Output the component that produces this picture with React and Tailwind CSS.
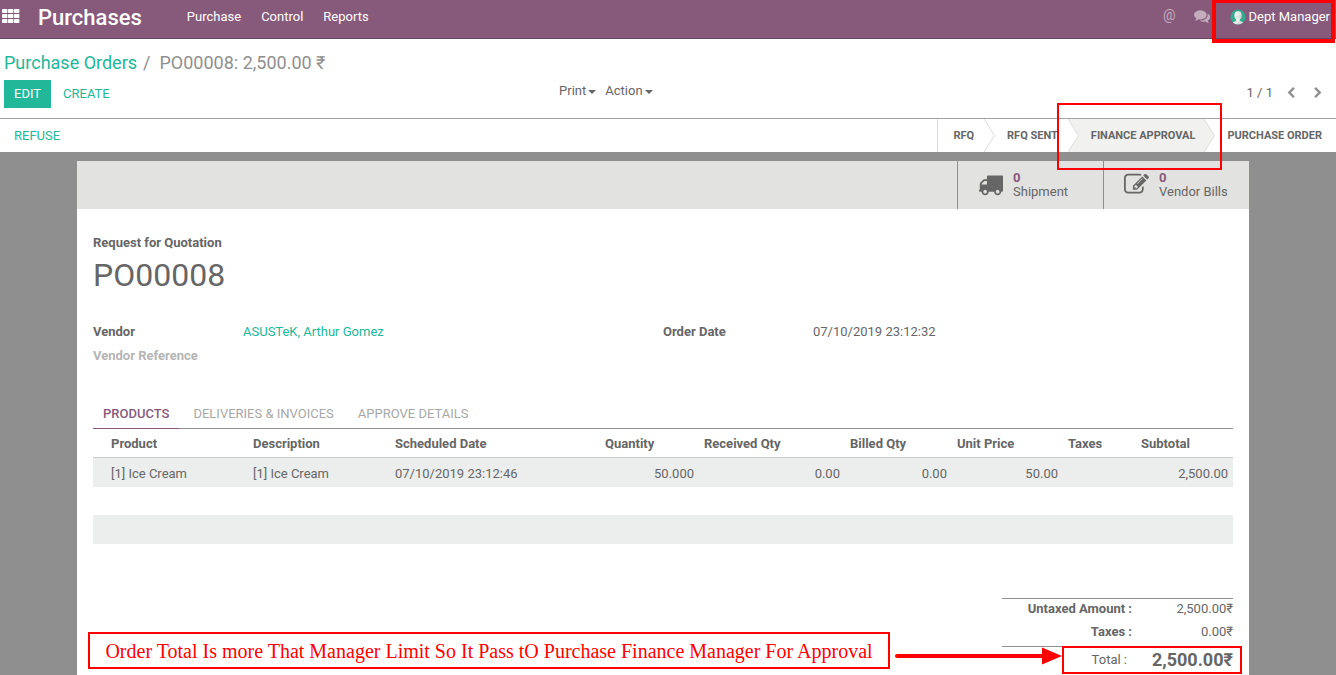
import React from "react";

function Icon({ path, className }) {
  return (
    <svg viewBox="0 0 1792 1792" fill="currentColor" className={className} aria-hidden="true">
      <path d={path} />
    </svg>
  );
}

const TRUCK =
  "M640 1408q0-52-38-90t-90-38-90 38-38 90 38 90 90 38 90-38 38-90zm-384-512h384v-256h-158q-13 0-22 9l-195 195q-9 9-9 22v30zm1280 512q0-52-38-90t-90-38-90 38-38 90 38 90 90 38 90-38 38-90zm256-1088v1024q0 15-4 26.5t-13.5 18.5-16.5 11.5-23.5 6-22.5 2-25.5 0-22.5-.5q0 106-75 181t-181 75-181-75-75-181h-384q0 106-75 181t-181 75-181-75-75-181h-64q-3 0-22.5.5t-25.5 0-22.5-2-23.5-6-16.5-11.5-13.5-18.5-4-26.5q0-26 19-45t45-19v-320q0-8-.5-35t0-38 2.5-34.5 6.5-37 14-30.5 22.5-30l198-198q19-19 50.5-32t58.5-13h160v-192q0-26 19-45t45-19h1024q26 0 45 19t19 45z";
const PENCIL_SQUARE =
  "M888 1184l116-116-152-152-116 116v56h96v96h56zm440-720q-16-16-33 1l-350 350q-17 17-1 33t33-1l350-350q17-17 1-33zm80 594v190q0 119-84.5 203.5t-203.5 84.5h-832q-119 0-203.5-84.5t-84.5-203.5v-832q0-119 84.5-203.5t203.5-84.5h832q63 0 117 25 15 7 18 23 3 17-9 29l-49 49q-14 14-32 8-23-6-45-6h-832q-66 0-113 47t-47 113v832q0 66 47 113t113 47h832q66 0 113-47t47-113v-126q0-13 9-22l64-64q15-15 35-7t20 29zm-96-738l288 288-672 672h-288v-288zm444 132l-92 92-288-288 92-92q28-28 68-28t68 28l152 152q28 28 28 68t-28 68z";
const COMMENTS =
  "M1408 768q0 139-94 257t-256.5 186.5-353.5 68.5q-86 0-176-16-124 88-278 128-36 9-86 16h-3q-11 0-20.5-8t-11.5-21q-1-3-1-6.5t.5-6.5 2-6l2.5-5 3.5-5.5 4-5 4.5-5 4-4.5q5-6 23-25t26-29.5 22.5-29 25-38.5 20.5-44q-124-72-195-177t-71-224q0-139 94-257t256.5-186.5 353.5-68.5 353.5 68.5 256.5 186.5 94 257zm384 256q0 120-71 224.5t-195 176.5q10 24 20.5 44t25 38.5 22.5 29 26 29.5 23 25q1 1 4 4.5t4.5 5 4 5 3.5 5.5l2.5 5 2 6 .5 6.5-1 6.5q-3 14-13 22t-22 7q-50-7-86-16-154-40-278-128-90 16-176 16-271 0-472-132 58 4 88 4 161 0 309-45t264-129q125-92 192-212t67-254q0-77-23-152 129 71 204 178t75 230z";
const CHEVRON_LEFT =
  "M1427 301l-531 531 531 531q19 19 19 45t-19 45l-166 166q-19 19-45 19t-45-19l-742-742q-19-19-19-45t19-45l742-742q19-19 45-19t45 19l166 166q19 19 19 45t-19 45z";
const CHEVRON_RIGHT =
  "M1363 877l-742 742q-19 19-45 19t-45-19l-166-166q-19-19-19-45t19-45l531-531-531-531q-19-19-19-45t19-45l166-166q19-19 45-19t45 19l742 742q19 19 19 45t-19 45z";

function AppsIcon() {
  return (
    <svg viewBox="0 0 18 14" className="h-3.5 w-[18px]" fill="currentColor" aria-hidden="true">
      {[0, 5, 10].map((y) =>
        [0, 6, 12].map((x) => <rect key={`${x}-${y}`} x={x} y={y} width="5.4" height="4" rx="0.8" />)
      )}
    </svg>
  );
}

function Avatar() {
  return (
    <svg viewBox="0 0 16 16" className="h-4 w-4" aria-hidden="true">
      <defs>
        <linearGradient id="face" x1="0" y1="0" x2="1" y2="1">
          <stop offset="0" stopColor="#ffffff" />
          <stop offset="1" stopColor="#c4cfcc" />
        </linearGradient>
        <clipPath id="disc">
          <circle cx="8" cy="8" r="7.6" />
        </clipPath>
      </defs>
      <circle cx="8" cy="8" r="7.6" fill="#35a98d" />
      <g clipPath="url(#disc)" fill="url(#face)">
        <ellipse cx="8" cy="6.6" rx="3.6" ry="4.4" />
        <path d="M6.2 9.5h3.6v2.2l3 1.6V16H3.2v-2.7l3-1.6z" />
      </g>
    </svg>
  );
}

function Header() {
  return (
    <header className="flex h-[39px] items-center border-b border-[#68465f] bg-[#875a7b] pl-0.5 pr-1.5 text-white">
      <button type="button" aria-label="Applications" className="mb-1.5">
        <AppsIcon />
      </button>
      <a href="#purchases" className="ml-[18px] pb-0.5 text-[22px] leading-6 font-medium">
        Purchases
      </a>
      <nav className="ml-[45px] flex flex-1 gap-5 pb-1">
        <a href="#purchase">Purchase</a>
        <a href="#control">Control</a>
        <a href="#reports">Reports</a>
      </nav>
      <div className="flex h-full items-center pb-1">
        <button type="button" aria-label="Mentions" className="mr-[18px] mb-1 text-sm text-[#c3adbd]">
          @
        </button>
        <button type="button" aria-label="Conversations" className="mr-5 mb-0.5 text-[#c3adbd]">
          <Icon path={COMMENTS} className="h-4 w-4" />
        </button>
        <button type="button" className="relative flex items-center gap-[3px]">
          <Avatar />
          <span>Dept Manager</span>
          <span className="pointer-events-none absolute -top-2 -right-[5px] -bottom-4 -left-[18px] border-4 border-[#ff0000]" />
        </button>
      </div>
    </header>
  );
}

function Menu({ label }) {
  return (
    <button type="button" className="flex h-[22px] items-center gap-0.5">
      {label}
      <svg viewBox="0 0 8 4" className="mt-0.5 h-1 w-2" fill="currentColor" aria-hidden="true">
        <path d="M0 0h8L4 4z" />
      </svg>
    </button>
  );
}

function ControlPanel() {
  return (
    <div className="border-b border-[#a2a2a2] px-1 pt-3 pb-2.5">
      <div className="flex h-6 items-center text-lg text-[#8f8f8f]">
        <a href="#orders" className="text-[#21b799]">
          Purchase Orders
        </a>
        <span className="mr-[9px] ml-1.5">/</span>
        <span>PO00008: 2,500.00 ₹</span>
      </div>
      <div className="mt-[5px] flex h-7">
        <div className="flex w-[41.8%] gap-0.5">
          <button type="button" className="bg-[#21b799] px-2.5 text-white">
            EDIT
          </button>
          <button type="button" className="px-2.5 text-[#21b799]">
            CREATE
          </button>
        </div>
        <div className="flex flex-1 gap-[9px]">
          <Menu label="Print" />
          <Menu label="Action" />
        </div>
        <div className="flex h-[26px] items-center pr-2">
          <span className="mr-3">1 / 1</span>
          <button type="button" aria-label="Previous" className="mr-[15px] text-[#8f8f8f]">
            <Icon path={CHEVRON_LEFT} className="h-3 w-3" />
          </button>
          <button type="button" aria-label="Next" className="text-[#8f8f8f]">
            <Icon path={CHEVRON_RIGHT} className="h-3 w-3" />
          </button>
        </div>
      </div>
    </div>
  );
}

function StepArrow({ left, right }) {
  return (
    <svg viewBox="0 0 11 33" className="h-full w-[11px]" preserveAspectRatio="none" aria-hidden="true">
      <rect width="11" height="33" fill={right} />
      <path d="M0 0L10.500 16.500L0 33z" fill={left} />
      <path d="M0 0L10.500 16.500L0 33" fill="none" stroke="#dcdcdc" />
    </svg>
  );
}

function StatusBar() {
  return (
    <div className="flex h-[33px] items-stretch justify-between pr-3.5 pl-1">
      <button type="button" className="px-2.5 text-[#21b799]">
        REFUSE
      </button>
      <ol className="flex items-stretch border-l border-[#dcdcdc] text-[11px] font-bold">
        <li className="flex items-center pr-2.5 pl-[15px]">RFQ</li>
        <li aria-hidden="true">
          <StepArrow left="#ffffff" right="#ffffff" />
        </li>
        <li className="flex items-center pr-2.5 pl-3">RFQ SENT</li>
        <li className="relative flex items-stretch" aria-current="step">
          <StepArrow left="#ffffff" right="#f1f1f0" />
          <span className="flex items-center bg-[#f1f1f0] pr-[9px] pl-3">FINANCE APPROVAL</span>
          <StepArrow left="#f1f1f0" right="#ffffff" />
          <span className="pointer-events-none absolute -top-4 -right-[7px] -bottom-[18px] -left-[11px] z-10 border-2 border-[#ff0000]" />
        </li>
        <li className="flex items-center pl-3">PURCHASE ORDER</li>
      </ol>
    </div>
  );
}

function StatButton({ icon, value, label }) {
  return (
    <button
      type="button"
      className="flex w-[146px] items-center border-l border-[#8f8f8f] pl-5 text-left leading-[14px]"
    >
      <Icon path={icon} className="mr-2.5 mb-0.5 h-[25px] w-[25px]" />
      <span>
        <span className="block font-bold text-[#875a7b]">{value}</span>
        <span className="block">{label}</span>
      </span>
    </button>
  );
}

const COLUMNS = [
  { name: "Product", cell: "[1] Ice Cream", head: "w-[155px] pl-[18px]", body: "pl-[18px]" },
  { name: "Description", cell: "[1] Ice Cream", head: "w-[142px] pl-[5px]", body: "pl-[5px]" },
  { name: "Scheduled Date", cell: "07/10/2019 23:12:46", head: "pl-[5px]", body: "pl-[5px]" },
  { name: "Quantity", cell: "50.000", head: "w-[99px] pl-[5px]", body: "pr-[5px] text-right" },
  { name: "Received Qty", cell: "0.00", head: "w-[146px] pl-[5px]", body: "pr-[5px] text-right" },
  { name: "Billed Qty", cell: "0.00", head: "w-[107px] pl-[5px]", body: "pr-[5px] text-right" },
  { name: "Unit Price", cell: "50.00", head: "w-[111px] pl-[5px]", body: "pr-[5px] text-right" },
  { name: "Taxes", cell: "", head: "w-[73px] pl-[5px]", body: "pl-[5px]" },
  { name: "Subtotal", cell: "2,500.00", head: "w-[97px] pl-[5px]", body: "pr-[5px] text-right" },
];

function OrderLines() {
  return (
    <table className="w-full table-fixed border-separate border-spacing-0">
      <thead>
        <tr className="h-[29px]">
          {COLUMNS.map((c) => (
            <th key={c.name} scope="col" className={`border-b border-[#cacaca] pt-0.5 text-left font-bold ${c.head}`}>
              {c.name}
            </th>
          ))}
        </tr>
      </thead>
      <tbody>
        <tr className="h-[29px] bg-[#eceeed]">
          {COLUMNS.map((c) => (
            <td key={c.name} className={`pt-0.5 ${c.body}`}>
              {c.cell}
            </td>
          ))}
        </tr>
        <tr className="h-7">
          <td colSpan={9} />
        </tr>
        <tr className="h-[29px] bg-[#eceeed]">
          <td colSpan={9} />
        </tr>
      </tbody>
    </table>
  );
}

function Totals() {
  return (
    <dl className="mt-[54px] ml-auto w-[231px] border-t border-[#8f8f8f]">
      <div className="flex h-5 items-center">
        <dt className="w-[130px] text-right font-bold">Untaxed Amount :</dt>
        <dd className="flex-1 text-right">2,500.00₹</dd>
      </div>
      <div className="flex h-[27px] items-center pb-0.5">
        <dt className="w-[130px] text-right font-bold">Taxes :</dt>
        <dd className="flex-1 text-right">0.00₹</dd>
      </div>
      <div className="relative flex h-7 items-center border-t border-[#8f8f8f] pb-0.5">
        <dt className="w-[125px] text-right">Total :</dt>
        <dd className="flex-1 text-right text-lg leading-5 font-bold">2,500.00₹</dd>
        <span className="pointer-events-none absolute -top-px -right-[9px] bottom-0 left-[60px] border-2 border-[#ff0000]" />
        <div className="absolute -top-[15px] right-[171px] flex gap-[5px]">
          <p className="flex h-[37px] min-w-[802px] items-center justify-center border-2 border-[#ff0000] px-2 font-['Liberation_Serif',serif] text-xl whitespace-nowrap text-[#ff0000]">
            Order Total Is more That Manager Limit So It Pass tO Purchase Finance Manager For Approval
          </p>
          <svg viewBox="0 0 167 18" className="mt-[15px] h-[18px] w-[167px]" aria-hidden="true">
            <path d="M2 9H150" stroke="#ff0000" strokeWidth="4" strokeLinecap="round" />
            <path d="M147 0.500L167 9L147 17.500z" fill="#ff0000" />
          </svg>
        </div>
      </div>
    </dl>
  );
}

function Sheet() {
  return (
    <main className="flex flex-1 bg-[#8f8f8f] pt-[9px] pr-2.5">
      <div className="mx-auto w-full max-w-[1172px] bg-white">
        <div className="flex h-12 justify-end bg-[#e2e2e0]">
          <StatButton icon={TRUCK} value="0" label="Shipment" />
          <StatButton icon={PENCIL_SQUARE} value="0" label="Vendor Bills" />
        </div>
        <div className="px-4 pt-6">
          <div className="font-bold">Request for Quotation</div>
          <h1 className="text-[32px] leading-[44px]">PO00008</h1>
          <dl className="mt-[23px] grid grid-cols-2 leading-6">
            <div className="flex">
              <dt className="w-[150px] font-bold">Vendor</dt>
              <dd>
                <a href="#vendor" className="text-[#21b799]">
                  ASUSTeK, Arthur Gomez
                </a>
              </dd>
            </div>
            <div className="flex">
              <dt className="w-[150px] font-bold">Order Date</dt>
              <dd>07/10/2019 23:12:32</dd>
            </div>
            <div className="flex">
              <dt className="w-[150px] font-bold text-[#b5b5b5]">Vendor Reference</dt>
              <dd />
            </div>
          </dl>
          <div role="tablist" className="mt-[30px] flex h-[31px] gap-1 border-b border-[#8f8f8f] text-[#a8a8a8]">
            <button
              type="button"
              role="tab"
              aria-selected="true"
              className="-mb-px border-b border-[#875a7b] px-2.5 pt-0.5 font-medium text-[#875a7b]"
            >
              PRODUCTS
            </button>
            <button type="button" role="tab" aria-selected="false" className="px-2.5 pt-0.5">
              DELIVERIES &amp; INVOICES
            </button>
            <button type="button" role="tab" aria-selected="false" className="px-2.5 pt-0.5">
              APPROVE DETAILS
            </button>
          </div>
          <OrderLines />
          <Totals />
        </div>
      </div>
    </main>
  );
}

export default function App() {
  return (
    <div className="flex min-h-screen flex-col bg-white font-['Roboto',sans-serif] text-[13px] leading-5 text-[#666666]">
      <Header />
      <ControlPanel />
      <StatusBar />
      <Sheet />
    </div>
  );
}
